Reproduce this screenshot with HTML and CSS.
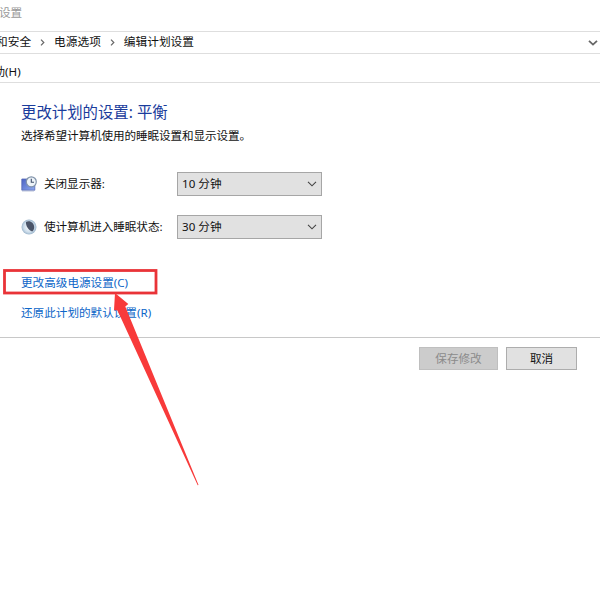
FILE: index.html
```html
<!DOCTYPE html>
<html lang="zh-CN">
<head>
<meta charset="utf-8">
<title>编辑计划设置</title>
<link rel="stylesheet" href="styles.css">
</head>
<body>
<div class="window">
  <header class="titlebar"><span>设置</span></header>
  <nav class="address">
    <span>和安全</span>
    <svg class="sep" viewBox="0 0 5 7"><path d="M1 .7 3.8 3.5 1 6.3"/></svg>
    <span>电源选项</span>
    <svg class="sep" viewBox="0 0 5 7"><path d="M1 .7 3.8 3.5 1 6.3"/></svg>
    <span>编辑计划设置</span>
    <svg class="history" viewBox="0 0 10 6"><path d="M1 .8 5 4.6 9 .8"/></svg>
  </nav>
  <div class="menubar"><span>助<span class="latin">(H)</span></span></div>
  <main class="content">
    <h1>更改计划的设置<span class="latin">: </span>平衡</h1>
    <p class="intro">选择希望计算机使用的睡眠设置和显示设置。</p>
    <div class="row">
      <svg class="icon" viewBox="0 0 16 16">
        <defs>
          <linearGradient id="screen" x2="1" y2="1"><stop offset="0" stop-color="#4a62c4"/><stop offset="1" stop-color="#8fabef"/></linearGradient>
          <radialGradient id="moon"><stop offset="0" stop-color="#fff"/><stop offset=".7" stop-color="#cbdcea"/><stop offset="1" stop-color="#9db6cc"/></radialGradient>
        </defs>
        <path d="M.8 3h13v11.200H.8z" fill="url(#screen)" stroke="#5668b4" stroke-width=".8"/>
        <path d="M1 15h12" stroke="#aab4d0" stroke-width=".8"/>
        <circle cx="10.300" cy="5.800" r="5" fill="#edf3f8" stroke="#8193aa" stroke-width="1.200"/>
        <path d="M10.300 2.800v3.400h2.700" fill="none" stroke="#42516b" stroke-width="1.100"/>
      </svg>
      <span class="label">关闭显示器<span class="latin">:</span></span>
      <div class="select"><span><span class="latin">10 </span>分钟</span><svg viewBox="0 0 10 6"><path d="M1 .8 5 4.8 9 .8"/></svg></div>
    </div>
    <div class="row second">
      <svg class="icon" viewBox="0 0 16 16">
        <circle cx="8" cy="8" r="7.500" fill="url(#moon)"/>
        <path d="M5 3C8.500 .8 13 3.500 13.200 8c0 2-.8 3.700-2 4.500C8 11.300 4.600 7.500 5 3z" fill="#4a5468"/>
      </svg>
      <span class="label">使计算机进入睡眠状态<span class="latin">:</span></span>
      <div class="select"><span><span class="latin">30 </span>分钟</span><svg viewBox="0 0 10 6"><path d="M1 .8 5 4.8 9 .8"/></svg></div>
    </div>
    <div class="links">
      <a>更改高级电源设置<span class="latin">(C)</span></a>
      <a>还原此计划的默认设置<span class="latin">(R)</span></a>
    </div>
  </main>
  <footer class="actions">
    <button class="save" disabled>保存修改</button>
    <button class="cancel">取消</button>
  </footer>
  <svg class="annotation" viewBox="0 0 600 602">
    <rect x="4.500" y="270.500" width="151.500" height="22.500"/>
    <path d="M115 293 128.300 304 125.300 306.500 198.500 485 197.700 485.200 117.500 310.500 114 310z"/>
  </svg>
</div>
</body>
</html>
```
FILE: styles.css
```css
* { box-sizing: border-box; }
body {
  margin: 0;
  background: #fff;
  color: #111;
  font: 11.6px/16px "Noto Sans CJK SC", sans-serif;
}
.window { position: relative; width: 600px; height: 602px; overflow: hidden; }
.window span, .window a { white-space: pre; }
.latin { font-family: "Noto Sans", sans-serif; }
.titlebar { height: 31px; padding-top: 4px; color: #999; }
.titlebar span { margin-left: -1px; }
.address {
  display: flex;
  align-items: center;
  height: 23px;
  margin-left: -4px;
  border-top: 1px solid #dedede;
  border-bottom: 1px solid #dedede;
}
.address span { padding-bottom: 3px; font-size: 11.7px; }
.sep { width: 5px; height: 7px; margin: 0 9px; }
.history { width: 10px; height: 6px; margin: 1px 2px 0 auto; }
.sep path { fill: none; stroke: #666; stroke-width: 1.2; }
.history path { fill: none; stroke: #666; stroke-width: 1.8; }
.menubar { height: 29px; padding-top: 9px; border-bottom: 1px solid #dedede; }
.menubar > span { margin-left: -6.500px; }
.content { height: 255px; padding: 17px 21px 0; border-bottom: 1px solid #c8c8c8; }
h1 { margin: 0; font-size: 15.4px; line-height: 22px; font-weight: 400; color: #1a3c9c; }
.intro { margin: 3px 0 0; letter-spacing: -.1px; }
.row { display: flex; align-items: center; height: 24px; margin-top: 29px; }
.row.second { margin-top: 19px; }
.icon { width: 16px; height: 16px; margin: 0 7px 1px 0; }
.label { width: 133px; padding-bottom: 2px; letter-spacing: -.05px; }
.select {
  display: flex;
  align-items: center;
  justify-content: space-between;
  width: 145px;
  height: 24px;
  padding: 0 4px;
  border: 1px solid #a6a6a6;
  background: #e1e1e1;
}
.select > span { padding-bottom: 2px; }
.select svg { width: 10px; height: 6px; }
.select path { fill: none; stroke: #444; stroke-width: 1.1; }
.links { display: flex; flex-direction: column; gap: 13px; margin-top: 35px; color: #0d66c8; }
.actions { display: flex; justify-content: flex-end; gap: 8px; padding: 9px 23px 0 0; }
button { height: 23px; padding: 0 0 2px; border: 1px solid #adadad; background: #e1e1e1; color: #111; font: inherit; }
.save { width: 79px; border-color: #bfbfbf; background: #ccc; color: #8b8b8b; }
.cancel { width: 71px; }
.annotation { position: absolute; inset: 0; width: 600px; height: 602px; pointer-events: none; }
.annotation rect { fill: none; stroke: #e93338; stroke-width: 2.8; }
.annotation path { fill: #f83a3a; }
```
